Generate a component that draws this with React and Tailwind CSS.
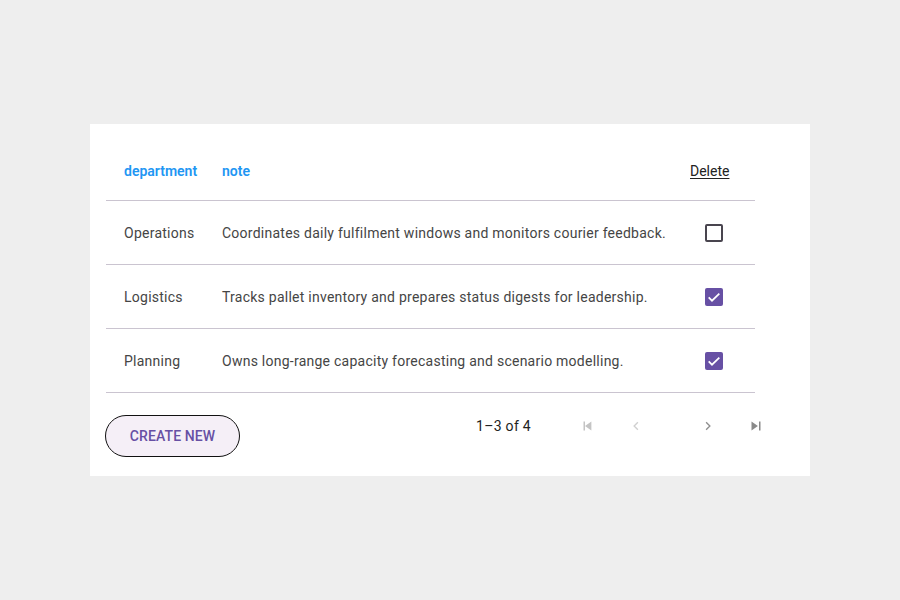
import React from "react";

const rows = [
  { d: "Operations", n: "Coordinates daily fulfilment windows and monitors courier feedback.", c: false },
  { d: "Logistics", n: "Tracks pallet inventory and prepares status digests for leadership.", c: true },
  { d: "Planning", n: "Owns long-range capacity forecasting and scenario modelling.", c: true },
];

function Box({ checked }) {
  if (checked) {
    return (
      <div className="w-[18px] h-[18px] rounded-[2px] bg-[#6750a4] flex items-center justify-center">
        <svg width="16" height="16" viewBox="0 0 24 24">
          <path d="M4 12.5l5 5L20 7" fill="none" stroke="#fff" strokeWidth="2.6" />
        </svg>
      </div>
    );
  }
  return <div className="w-[18px] h-[18px] rounded-[2px] border-2 border-[#49454f]" />;
}

function Fill({ d, color }) {
  return (
    <svg width="18" height="18" viewBox="0 0 24 24">
      <path d={d} fill={color} />
    </svg>
  );
}

function Chev({ d, color }) {
  return (
    <svg width="18" height="18" viewBox="0 0 24 24">
      <path d={d} fill="none" stroke={color} strokeWidth="1.8" />
    </svg>
  );
}

export default function App() {
  return (
    <div
      className="w-[900px] h-[600px] bg-[#eeeeee] pt-[124px] pl-[90px]"
      style={{ fontFamily: "Roboto, 'Liberation Sans', sans-serif" }}
    >
      <div className="w-[720px] h-[352px] bg-white px-4 pt-4">
        <div className="w-[649px] text-[14px] tracking-[0.25px] text-[#454545]">
          <div className="grid grid-cols-[98px_1fr_83px] h-[61px] pt-[2px] border-b border-[#cac4d0] items-center">
            <div className="pl-[18px] text-[#2196f3] font-semibold tracking-normal">department</div>
            <div className="pl-[18px] text-[#2196f3] font-semibold tracking-normal">note</div>
            <div className="pl-[18px] text-[#222] font-normal underline underline-offset-2 tracking-normal">Delete</div>
          </div>
          {rows.map((r) => (
            <div key={r.d} className="grid grid-cols-[98px_1fr_83px] h-[64px] pt-[2px] border-b border-[#cac4d0] items-center">
              <div className="pl-[18px]">{r.d}</div>
              <div className="pl-[18px]">{r.n}</div>
              <div className="pl-[33px] -mt-[2px]">
                <Box checked={r.c} />
              </div>
            </div>
          ))}
        </div>
        <div className="flex items-start mt-[22px] -ml-px">
          <button className="w-[135px] h-[42px] rounded-full border border-[#111] bg-[#f5eff7] text-[#6750a4] text-[14px] font-medium tracking-[0.1px]">
            CREATE NEW
          </button>
          <div className="ml-[236px] h-[22px] flex items-center">
            <div className="w-[57px] text-[14px] text-[#222] tracking-[0.3px]">1–3 of 4</div>
            <div className="ml-[31px] w-[48px] flex justify-center">
              <Fill color="#c4c4c4" d="M6 6h2v12H6zm2 6l8.5 6V6z" />
            </div>
            <div className="w-[48px] flex justify-center">
              <Chev color="#d0d0d0" d="M14.5 7L9.5 12l5 5" />
            </div>
            <div className="ml-[24px] w-[48px] flex justify-center">
              <Chev color="#8e8e8e" d="M9.5 7l5 5-5 5" />
            </div>
            <div className="w-[48px] flex justify-center">
              <Fill color="#8a8a8a" d="M6 18l8.5-6L6 6v12zM16 6v12h2V6h-2z" />
            </div>
          </div>
        </div>
      </div>
    </div>
  );
}
